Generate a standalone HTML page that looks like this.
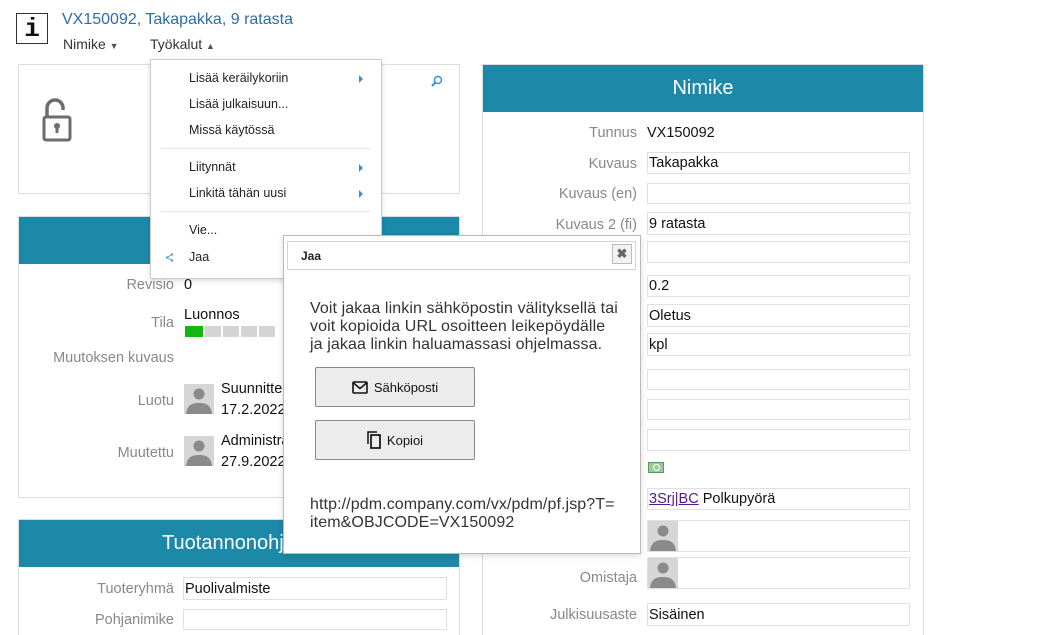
<!DOCTYPE html>
<html><head><meta charset="utf-8"><style>
*{box-sizing:border-box;margin:0;padding:0}
html,body{width:1054px;height:635px;overflow:hidden}
body{background:#fff;font-family:"Liberation Sans",sans-serif;position:relative;color:#111}
.a{position:absolute}
.card{position:absolute;border:1px solid #ddd;background:#fff}
.hd{position:absolute;background:#1d89a8;color:#fff;font-size:20px;text-align:center}
.lbl{position:absolute;color:#888;font-size:14.5px;text-align:right;white-space:nowrap}
.val{position:absolute;font-size:14.5px;white-space:nowrap}
.inp{position:absolute;border:1px solid #dde1e6;background:#fff;font-size:14.5px;padding-left:1px;white-space:nowrap;display:flex;align-items:center}
.mi{position:absolute;left:38px;font-size:12.5px;color:#222}
.arr{position:absolute;left:208px;width:0;height:0;border-left:4px solid #3a8fd8;border-top:4px solid transparent;border-bottom:4px solid transparent}
.sep{position:absolute;left:10px;right:10px;height:1px;background:#e5e5e5}
.btn{position:absolute;left:31px;width:160px;height:40px;border:1px solid #888;background:#ececec;border-radius:2px;font-size:13px;display:flex;align-items:center;justify-content:center;gap:6px}
.dt{position:absolute;left:26px;font-size:16px;line-height:18px;color:#333;letter-spacing:0.1px}
</style></head><body>
<svg width="0" height="0" style="position:absolute"><defs><g id="p"><rect width="30" height="30" fill="#d6d6d6"/><circle cx="15" cy="10" r="5.5" fill="#8a8a8a"/><path d="M2 30 C3 21 8 19 15 19 C22 19 27 21 28 30Z" fill="#8a8a8a"/></g></defs></svg>

<div class="a" style="left:16px;top:13px;width:32px;height:31px;border:1px solid #333;font:bold 26px 'Liberation Mono',monospace;text-align:center;line-height:30px">i</div>
<div class="a" style="left:62px;top:11px;font-size:16px;color:#2f6da3">VX150092, Takapakka, 9 ratasta</div>
<div class="a" style="left:63px;top:36px;font-size:14px;color:#333">Nimike <span style="font-size:9px;color:#555">▼</span></div>
<div class="a" style="left:150px;top:36px;font-size:14px;color:#333">Työkalut <span style="font-size:9px;color:#555">▲</span></div>

<div class="card" style="left:18px;top:64px;width:442px;height:130px">
<svg class="a" style="left:23px;top:33px" width="30" height="44" viewBox="0 0 30 44"><path d="M5 18 V10 a8 8 0 0 1 16 0 V12" fill="none" stroke="#6d6d6d" stroke-width="3.5"/><rect x="2" y="19" width="26" height="23" rx="2" fill="none" stroke="#6d6d6d" stroke-width="3"/><circle cx="15" cy="28" r="3" fill="#6d6d6d"/><rect x="13.5" y="29" width="3" height="6" fill="#6d6d6d"/></svg>
<svg class="a" style="left:412px;top:10px" width="12" height="12"><circle cx="7" cy="5" r="3.5" fill="none" stroke="#3a8fd8" stroke-width="1.5"/><path d="M4.5 7.5 L1 11" stroke="#3a8fd8" stroke-width="2"/></svg>
</div>

<div class="card" style="left:18px;top:216px;width:442px;height:282px">
<div class="hd" style="left:0;top:0;width:440px;height:47px"></div>
<div class="lbl" style="right:285px;top:60px">Revisio</div><div class="val" style="left:165px;top:60px">0</div>
<div class="lbl" style="right:285px;top:98px">Tila</div><div class="val" style="left:165px;top:90px">Luonnos</div>
<div class="a" style="left:166px;top:109px;width:18px;height:11px;background:#12b712"></div>
<div class="a" style="left:186px;top:109px;width:16px;height:11px;background:#d4d4d4"></div>
<div class="a" style="left:204px;top:109px;width:16px;height:11px;background:#d4d4d4"></div>
<div class="a" style="left:222px;top:109px;width:16px;height:11px;background:#d4d4d4"></div>
<div class="a" style="left:240px;top:109px;width:16px;height:11px;background:#d4d4d4"></div>
<div class="lbl" style="right:285px;top:133px">Muutoksen kuvaus</div>
<div class="lbl" style="right:285px;top:176px">Luotu</div>
<svg class="a" style="left:165px;top:167px" width="30" height="30"><use href="#p"/></svg>
<div class="val" style="left:202px;top:164px">Suunnittelija</div><div class="val" style="left:202px;top:185px">17.2.2022</div>
<div class="lbl" style="right:285px;top:228px">Muutettu</div>
<svg class="a" style="left:165px;top:219px" width="30" height="30"><use href="#p"/></svg>
<div class="val" style="left:202px;top:216px">Administrator</div><div class="val" style="left:202px;top:237px">27.9.2022</div>
</div>

<div class="card" style="left:18px;top:519px;width:442px;height:130px">
<div class="hd" style="left:0;top:0;width:440px;height:47px;line-height:47px">Tuotannonohjaus</div>
<div class="lbl" style="right:285px;top:61px">Tuoteryhmä</div><div class="inp" style="left:164px;top:57px;width:264px;height:23px">Puolivalmiste</div>
<div class="lbl" style="right:285px;top:92px">Pohjanimike</div><div class="inp" style="left:164px;top:89px;width:264px;height:21px"></div>
</div>

<div class="card" style="left:482px;top:64px;width:442px;height:590px">
<div class="hd" style="left:0;top:0;width:440px;height:47px;line-height:47px">Nimike</div>
<div class="lbl" style="right:286px;top:60px">Tunnus</div><div class="val" style="left:164px;top:60px">VX150092</div>
<div class="lbl" style="right:286px;top:91px">Kuvaus</div><div class="inp" style="left:164px;top:87px;width:263px;height:22px">Takapakka</div>
<div class="lbl" style="right:286px;top:121px">Kuvaus (en)</div><div class="inp" style="left:164px;top:118px;width:263px;height:21px"></div>
<div class="lbl" style="right:286px;top:152px">Kuvaus 2 (fi)</div><div class="inp" style="left:164px;top:147px;width:263px;height:23px">9 ratasta</div>
<div class="inp" style="left:164px;top:176px;width:263px;height:22px"></div>
<div class="inp" style="left:164px;top:210px;width:263px;height:22px">0.2</div>
<div class="inp" style="left:164px;top:239px;width:263px;height:23px">Oletus</div>
<div class="inp" style="left:164px;top:268px;width:263px;height:23px">kpl</div>
<div class="inp" style="left:164px;top:304px;width:263px;height:21px"></div>
<div class="inp" style="left:164px;top:334px;width:263px;height:21px"></div>
<div class="inp" style="left:164px;top:364px;width:263px;height:22px"></div>
<div class="a" style="left:165px;top:397px;width:16px;height:11px;background:#9ccc9c;border:1px solid #5a9a5a"><div style="margin:1px auto;width:7px;height:7px;border:1px solid #fff;border-radius:50%"></div></div>
<div class="inp" style="left:164px;top:423px;width:263px;height:22px"><span style="color:#551a8b;text-decoration:underline">3Srj|BC</span>&nbsp;Polkupyörä</div>
<div class="inp" style="left:164px;top:455px;width:263px;height:32px"><svg class="a" style="left:0;top:0" width="30" height="30"><use href="#p"/></svg></div>
<div class="lbl" style="right:286px;top:505px">Omistaja</div>
<div class="inp" style="left:164px;top:492px;width:263px;height:32px"><svg class="a" style="left:0;top:0" width="30" height="30"><use href="#p"/></svg></div>
<div class="lbl" style="right:286px;top:542px">Julkisuusaste</div><div class="inp" style="left:164px;top:538px;width:263px;height:23px">Sisäinen</div>
</div>

<div class="a" style="left:150px;top:59px;width:232px;height:220px;background:#fff;border:1px solid #ccc;box-shadow:0 2px 5px rgba(0,0,0,.15)">
<div class="mi" style="top:11px">Lisää keräilykoriin</div><div class="arr" style="top:15px"></div>
<div class="mi" style="top:37px">Lisää julkaisuun...</div>
<div class="mi" style="top:63px">Missä käytössä</div>
<div class="sep" style="top:88px"></div>
<div class="mi" style="top:100px">Liitynnät</div><div class="arr" style="top:104px"></div>
<div class="mi" style="top:126px">Linkitä tähän uusi</div><div class="arr" style="top:130px"></div>
<div class="sep" style="top:151px"></div>
<div class="mi" style="top:163px">Vie...</div>
<svg class="a" style="left:14px;top:193px" width="9" height="9"><circle cx="7" cy="1.5" r="1.2" fill="#5a9ad8"/><circle cx="2" cy="4.5" r="1.2" fill="#5a9ad8"/><circle cx="7" cy="7.5" r="1.2" fill="#5a9ad8"/><path d="M7 1.5 L2 4.5 L7 7.5" fill="none" stroke="#5a9ad8" stroke-width="1"/></svg>
<div class="mi" style="top:190px">Jaa</div>
</div>

<div class="a" style="left:283px;top:235px;width:358px;height:319px;background:#fff;border:1px solid #bbb;box-shadow:0 2px 6px rgba(0,0,0,.15)">
<div class="a" style="left:3px;top:5px;width:349px;height:29px;border:1px solid #d4d4d4"></div>
<div class="a" style="left:17px;top:13px;font-size:12px;font-weight:bold;color:#222">Jaa</div>
<div class="a" style="left:328px;top:8px;width:20px;height:20px;border:1px solid #bbb;background:#f2f2f2;color:#666;font-size:13px;font-weight:bold;text-align:center;line-height:18px">✖</div>
<div class="dt" style="top:64px">Voit jakaa linkin sähköpostin välityksellä tai<br>voit kopioida URL osoitteen leikepöydälle<br>ja jakaa linkin haluamassasi ohjelmassa.</div>
<div class="btn" style="top:131px"><svg width="16" height="13"><rect x="1" y="1" width="14" height="11" rx="1" fill="none" stroke="#111" stroke-width="1.6"/><path d="M1.5 2 L8 7.5 L14.5 2" fill="none" stroke="#111" stroke-width="1.6"/></svg>Sähköposti</div>
<div class="btn" style="top:184px"><svg width="14" height="18"><path d="M1 13 V1 H10" fill="none" stroke="#111" stroke-width="1.5"/><rect x="4" y="4" width="9" height="13" fill="none" stroke="#111" stroke-width="1.7"/></svg>Kopioi</div>
<div class="dt" style="top:260px">http://pdm.company.com/vx/pdm/pf.jsp?T=<br>item&amp;OBJCODE=VX150092</div>
</div>
</body></html>
